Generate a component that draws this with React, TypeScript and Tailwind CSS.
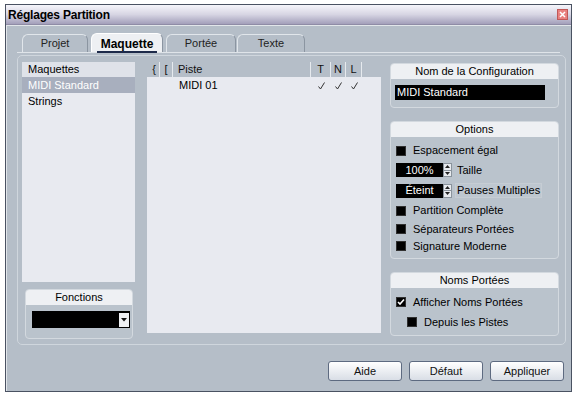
import React from "react";

const font = { fontFamily: '"Liberation Sans", Arial, sans-serif' };

function Box({ title, className, children }: { title: string; className?: string; children?: React.ReactNode }) {
  return (
    <div className={`rounded-[4px] border border-[#d3d9df] bg-[#bac3cc] overflow-hidden ${className ?? ""}`}>
      <div className="h-[15px] bg-[#eef0f3] flex items-center justify-center text-[11px] text-black leading-none">
        {title}
      </div>
      {children}
    </div>
  );
}

function Check({ checked }: { checked?: boolean }) {
  return (
    <div className="w-[10px] h-[10px] bg-black border border-[#303030] flex items-center justify-center shrink-0">
      {checked && (
        <svg width="8" height="8" viewBox="0 0 8 8">
          <path d="M1 4 L3 6 L7 1.5" stroke="white" strokeWidth="1.6" fill="none" />
        </svg>
      )}
    </div>
  );
}

function Spin({ value }: { value: string }) {
  return (
    <div className="flex h-[14px] shrink-0">
      <div className="w-[47px] bg-black text-white text-[11px] leading-none flex items-center justify-center">{value}</div>
      <div className="w-[9px] flex flex-col bg-[#e8ebef] border border-[#8a939c]">
        <div className="flex-1 flex items-center justify-center border-b border-[#8a939c]">
          <svg width="5" height="3" viewBox="0 0 5 3"><path d="M0 3 L2.5 0 L5 3Z" fill="#222" /></svg>
        </div>
        <div className="flex-1 flex items-center justify-center">
          <svg width="5" height="3" viewBox="0 0 5 3"><path d="M0 0 L2.5 3 L5 0Z" fill="#222" /></svg>
        </div>
      </div>
    </div>
  );
}

function Tick() {
  return (
    <svg width="7" height="8" viewBox="0 0 7 8">
      <path d="M0.5 4.5 L2.5 7 L6.5 0.5" stroke="#333" strokeWidth="1" fill="none" />
    </svg>
  );
}

function Button({ label }: { label: string }) {
  return (
    <div className="w-[74px] h-[20px] rounded-[3px] border border-[#5d6a80] bg-gradient-to-b from-[#ffffff] to-[#d9dee6] flex items-center justify-center text-[11px] text-[#111]">
      {label}
    </div>
  );
}

export default function App() {
  return (
    <div className="w-[576px] h-[395px] bg-white overflow-hidden" style={font}>
      <div className="ml-[5px] mt-[4px] w-[567px] h-[388px] border border-[#4a5262] flex flex-col">
        {/* title bar */}
        <div className="h-[20px] bg-gradient-to-b from-[#f6f6fb] via-[#d7d5e3] to-[#a39fba] flex items-center justify-between pl-[2px] pr-[3px] border-b border-[#8f8ca6]">
          <span className="text-[12px] font-bold text-black tracking-[-0.2px]">Réglages Partition</span>
          <div className="w-[11px] h-[11px] bg-[#e9807f] border border-[#c05858] flex items-center justify-center">
            <svg width="7" height="7" viewBox="0 0 7 7">
              <path d="M1 1 L6 6 M6 1 L1 6" stroke="white" strokeWidth="1.5" />
            </svg>
          </div>
        </div>

        {/* body */}
        <div className="flex-1 bg-[#b5bec8] flex flex-col border-l border-t border-[#e2e6ea]">
          {/* tabs */}
          <div className="ml-[10px] mr-[11px] mt-[9px] h-[18px] border-b border-[#dfe4e9] flex items-end pl-[5px] text-[11px]">
            <div className="w-[66px] h-[18px] rounded-t-[6px] border-t border-l border-[#e1e6eb] border-r border-r-[#8b95a1] flex items-center justify-center text-[#222]">
              Projet
            </div>
            <div className="ml-[3px] w-[72px] h-[19px] rounded-t-[6px] bg-[#eef0f3] border-t border-l border-[#ffffff] border-r border-r-[#8b95a1] flex items-center justify-center">
              <span className="text-[12px] font-bold text-black border-b-2 border-[#1d2a4a] px-[4px] leading-[14px] mt-[3px]">Maquette</span>
            </div>
            <div className="ml-[3px] w-[70px] h-[18px] rounded-t-[6px] border-t border-l border-[#e1e6eb] border-r border-r-[#8b95a1] flex items-center justify-center text-[#222]">
              Portée
            </div>
            <div className="ml-[1px] w-[68px] h-[18px] rounded-t-[6px] border-t border-l border-[#e1e6eb] border-r border-r-[#8b95a1] flex items-center justify-center text-[#222]">
              Texte
            </div>
          </div>

          {/* content panel */}
          <div className="ml-[10px] mt-[2px] w-[549px] h-[290px] rounded-[5px] border border-[#cfd6dd] flex pl-[4px] pt-[6px] text-[11px] text-black">
            {/* left column */}
            <div className="w-[113px] flex flex-col">
              <div className="h-[220px] bg-[#e8eaf0]">
                <div className="h-[15px] bg-[#dfe2e9] flex items-center pl-[6px]">Maquettes</div>
                <div className="h-[16px] bg-[#a8afbe] text-white flex items-center pl-[6px]">MIDI Standard</div>
                <div className="h-[16px] flex items-center pl-[6px]">Strings</div>
              </div>
              <Box title="Fonctions" className="mt-[7px] ml-[3px] w-[108px] h-[50px]">
                <div className="mt-[6px] ml-[6px] w-[98px] h-[17px] bg-black flex justify-end items-center pr-[1px]">
                  <div className="w-[10px] h-[14px] bg-[#eef0f3] flex items-center justify-center">
                    <svg width="6" height="4" viewBox="0 0 6 4"><path d="M0 0 L3 3.5 L6 0Z" fill="#111" /></svg>
                  </div>
                </div>
              </Box>
            </div>

            {/* track list */}
            <div className="ml-[12px] w-[236px] h-[271px] flex flex-col">
              <div className="h-[15px] flex items-center text-[#111]">
                <div className="w-[13px] h-full border-r border-[#e6eaee] flex items-center justify-end pr-[3px]">{"{"}</div>
                <div className="w-[13px] h-full border-r border-[#e6eaee] flex items-center justify-center">[</div>
                <div className="w-[138px] h-full border-r border-[#e6eaee] flex items-center pl-[5px]">Piste</div>
                <div className="w-[20px] h-full border-r border-[#e6eaee] flex items-center justify-center">T</div>
                <div className="w-[15px] h-full border-r border-[#e6eaee] flex items-center justify-center">N</div>
                <div className="w-[16px] h-full border-r border-[#e6eaee] flex items-center justify-center">L</div>
              </div>
              <div className="flex-1 bg-[#e8eaf0] w-[234px]">
                <div className="h-[17px] flex items-center">
                  <div className="w-[164px] pl-[32px]">MIDI 01</div>
                  <div className="w-[20px] flex justify-center"><Tick /></div>
                  <div className="w-[15px] flex justify-center"><Tick /></div>
                  <div className="w-[16px] flex justify-center"><Tick /></div>
                </div>
              </div>
            </div>

            {/* right column */}
            <div className="ml-[7px] w-[169px] pt-[1px] flex flex-col">
              <Box title="Nom de la Configuration" className="h-[45px]">
                <div className="mt-[6px] ml-[4px] w-[150px] h-[15px] bg-black text-white flex items-center pl-[2px]">MIDI Standard</div>
              </Box>

              <Box title="Options" className="mt-[13px] h-[138px]">
                <div className="pl-[5px] pt-[4px] flex flex-col">
                  <div className="h-[19px] flex items-center gap-[7px]"><Check /><span>Espacement égal</span></div>
                  <div className="h-[20px] flex items-center gap-[5px]"><Spin value="100%" /><span>Taille</span></div>
                  <div className="h-[21px] flex items-center gap-[3px]">
                    <Spin value="Éteint" />
                    <span className="border border-[#c6cdd4] bg-[#bec7d0] px-[1px] leading-[13px]">Pauses Multiples</span>
                  </div>
                  <div className="h-[19px] flex items-center gap-[7px]"><Check /><span>Partition Complète</span></div>
                  <div className="h-[18px] flex items-center gap-[7px]"><Check /><span>Séparateurs Portées</span></div>
                  <div className="h-[16px] flex items-center gap-[7px]"><Check /><span>Signature Moderne</span></div>
                </div>
              </Box>

              <Box title="Noms Portées" className="mt-[13px] h-[64px]">
                <div className="pl-[5px] pt-[4px] flex flex-col">
                  <div className="h-[20px] flex items-center gap-[7px]"><Check checked /><span>Afficher Noms Portées</span></div>
                  <div className="h-[20px] flex items-center gap-[7px] pl-[11px]"><Check /><span>Depuis les Pistes</span></div>
                </div>
              </Box>
            </div>
          </div>

          {/* buttons */}
          <div className="mt-[16px] flex justify-end gap-[7px] pr-[7px]">
            <Button label="Aide" />
            <Button label="Défaut" />
            <Button label="Appliquer" />
          </div>
        </div>
      </div>
    </div>
  );
}
